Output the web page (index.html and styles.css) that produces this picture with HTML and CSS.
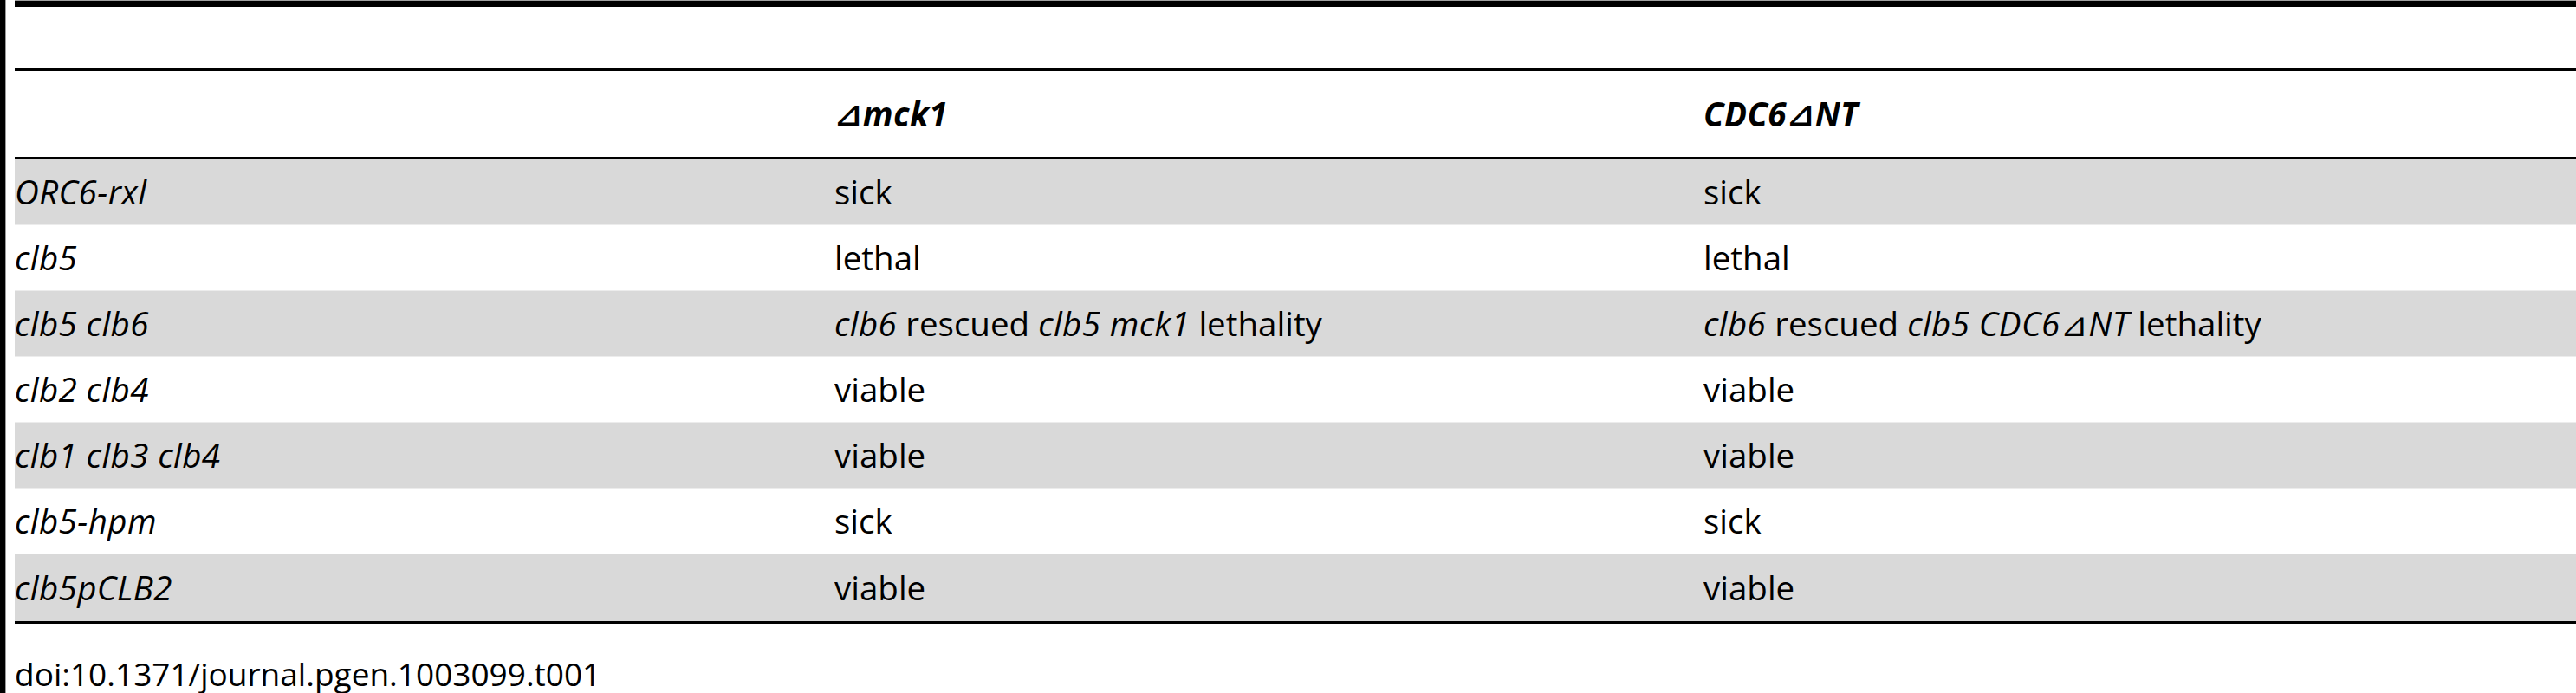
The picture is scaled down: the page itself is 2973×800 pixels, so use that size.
FILE: index.html
```html
<!DOCTYPE html>
<html>
<head>
<meta charset="utf-8">
<link rel="stylesheet" href="styles.css">
</head>
<body>
<div class="frame">
  <div class="content">
    <div class="topbar"></div>
    <div class="caption"></div>
    <div class="table">
      <div class="row head">
        <div class="cell"></div>
        <div class="cell"><b><i>⊿mck1</i></b></div>
        <div class="cell"><b><i>CDC6⊿NT</i></b></div>
      </div>
      <div class="row shade">
        <div class="cell"><i>ORC6-rxl</i></div>
        <div class="cell">sick</div>
        <div class="cell">sick</div>
      </div>
      <div class="row">
        <div class="cell"><i>clb5</i></div>
        <div class="cell">lethal</div>
        <div class="cell">lethal</div>
      </div>
      <div class="row shade">
        <div class="cell"><i>clb5 clb6</i></div>
        <div class="cell"><i>clb6</i> rescued <i>clb5 mck1</i> lethality</div>
        <div class="cell"><i>clb6</i> rescued <i>clb5 CDC6⊿NT</i> lethality</div>
      </div>
      <div class="row">
        <div class="cell"><i>clb2 clb4</i></div>
        <div class="cell">viable</div>
        <div class="cell">viable</div>
      </div>
      <div class="row shade">
        <div class="cell"><i>clb1 clb3 clb4</i></div>
        <div class="cell">viable</div>
        <div class="cell">viable</div>
      </div>
      <div class="row">
        <div class="cell"><i>clb5-hpm</i></div>
        <div class="cell">sick</div>
        <div class="cell">sick</div>
      </div>
      <div class="row shade last">
        <div class="cell"><i>clb5pCLB2</i></div>
        <div class="cell">viable</div>
        <div class="cell">viable</div>
      </div>
    </div>
    <div class="doi">doi:10.1371/journal.pgen.1003099.t001</div>
  </div>
</div>
</body>
</html>
```

FILE: styles.css
```css
html, body {
  margin: 0;
  padding: 0;
  background: #ffffff;
}
body {
  font-family: "Open Sans", "DejaVu Sans", sans-serif;
  font-size: 37px;
  color: #000000;
  overflow: hidden;
}
.frame {
  border-left: 6px solid #000000;
  box-shadow: inset 1px 0 0 #9a9a9a;
  min-height: 800px;
  box-sizing: border-box;
  padding-left: 11px;
  width: 3100px;
}
.content {
  border-top: 1px solid #a0a0a0;
}
.topbar {
  height: 7px;
  background: #000000;
}
.caption {
  height: 71px;
}
.table {
  border-top: 3px solid #000000;
  border-bottom: 3px solid #000000;
  font-size: 38.5px;
}
.row {
  display: grid;
  grid-template-columns: 946px 1003px 1fr;
  height: 75px;
  align-items: center;
  border-bottom: 1px solid #ececec;
}
.row.head {
  height: 99px;
  border-bottom: 3px solid #000000;
}
.row.shade {
  background: #d9d9d9;
}
.row.last {
  height: 77px;
  border-bottom: none;
}
.cell {
  white-space: nowrap;
  line-height: 1.2;
}
i {
  font-style: italic;
  letter-spacing: 0.4px;
}
b {
  font-weight: 700;
}
.doi {
  margin-top: 32px;
  white-space: nowrap;
}
```
